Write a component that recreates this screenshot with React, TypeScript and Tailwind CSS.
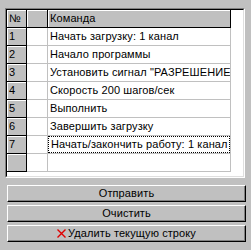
import React from "react";

/* ── Command list — rows of the string grid ───────────────────────────── */
const COMMANDS = [
  "Начать загрузку: 1 канал",
  "Начало программы",
  'Установить сигнал "РАЗРЕШЕНИЕ',
  "Скорость 200 шагов/сек",
  "Выполнить",
  "Завершить загрузку",
  "Начать/закончить работу: 1 канал",
];

const FONT = "font-['Liberation_Sans',Arial,sans-serif] text-[11px] tracking-[0.1px] text-black";

function FixedCell({ w, children }: { w: string; children?: React.ReactNode }) {
  return (
    <div
      className={`${w} h-full shrink-0 border-r border-b border-black bg-[#c0c0c0] shadow-[inset_1px_1px_0_#fff] flex items-center pl-[2px] whitespace-nowrap overflow-hidden`}
    >
      {children}
    </div>
  );
}

function DataCell({
  w,
  focused,
  children,
}: {
  w: string;
  focused?: boolean;
  children?: React.ReactNode;
}) {
  return (
    <div className={`${w} h-full shrink-0 border-r border-b border-[#c0c0c0] bg-white overflow-hidden`}>
      <div
        className={`h-full flex items-center pl-[2px] whitespace-nowrap ${
          focused ? "border border-dotted border-black pl-[1px]" : ""
        }`}
      >
        {children}
      </div>
    </div>
  );
}

function RedCross() {
  return (
    <svg width="9" height="9" viewBox="0 0 9 9" className="shrink-0">
      <path d="M0.5 0.5 L8.5 8.5 M8.5 0.5 L0.5 8.5" stroke="#e00000" strokeWidth="1.4" fill="none" />
    </svg>
  );
}

function WinButton({ children }: { children: React.ReactNode }) {
  return (
    <button
      type="button"
      className="w-[239px] h-[17px] border border-t-white border-l-white border-r-black border-b-black bg-[#c0c0c0] shadow-[inset_-1px_-1px_0_#808080] flex items-center justify-center gap-[2px] leading-none"
    >
      {children}
    </button>
  );
}

export default function App() {
  return (
    <div className={`w-[251px] h-[250px] bg-[#c0c0c0] pt-[8px] pl-[5px] ${FONT}`}>
      {/* ── Sunken grid frame ── */}
      <div className="w-[240px] h-[170px] border border-t-[#808080] border-l-[#808080] border-r-white border-b-white">
        <div className="h-full border border-t-black border-l-black border-r-[#dfdfdf] border-b-[#dfdfdf] bg-white">
          {/* header */}
          <div className="flex h-[18px]">
            <FixedCell w="w-[20px]">№</FixedCell>
            <FixedCell w="w-[21px]" />
            <FixedCell w="w-[183px]">Команда</FixedCell>
          </div>

          {COMMANDS.map((cmd, i) => (
            <div key={i} className="flex h-[18px]">
              <FixedCell w="w-[20px]">{i + 1}</FixedCell>
              <DataCell w="w-[21px]" />
              <DataCell w="w-[183px]" focused={i === COMMANDS.length - 1}>
                {cmd}
              </DataCell>
            </div>
          ))}

          {/* empty trailing row */}
          <div className="flex h-[18px]">
            <FixedCell w="w-[20px]" />
            <DataCell w="w-[21px]" />
            <DataCell w="w-[183px]" />
          </div>
        </div>
      </div>

      {/* ── Action buttons ── */}
      <div className="ml-[2px] mt-[7px] flex flex-col gap-[3px]">
        <WinButton>Отправить</WinButton>
        <WinButton>Очистить</WinButton>
        <WinButton>
          <RedCross />
          <span>Удалить текущую строку</span>
        </WinButton>
      </div>
    </div>
  );
}
